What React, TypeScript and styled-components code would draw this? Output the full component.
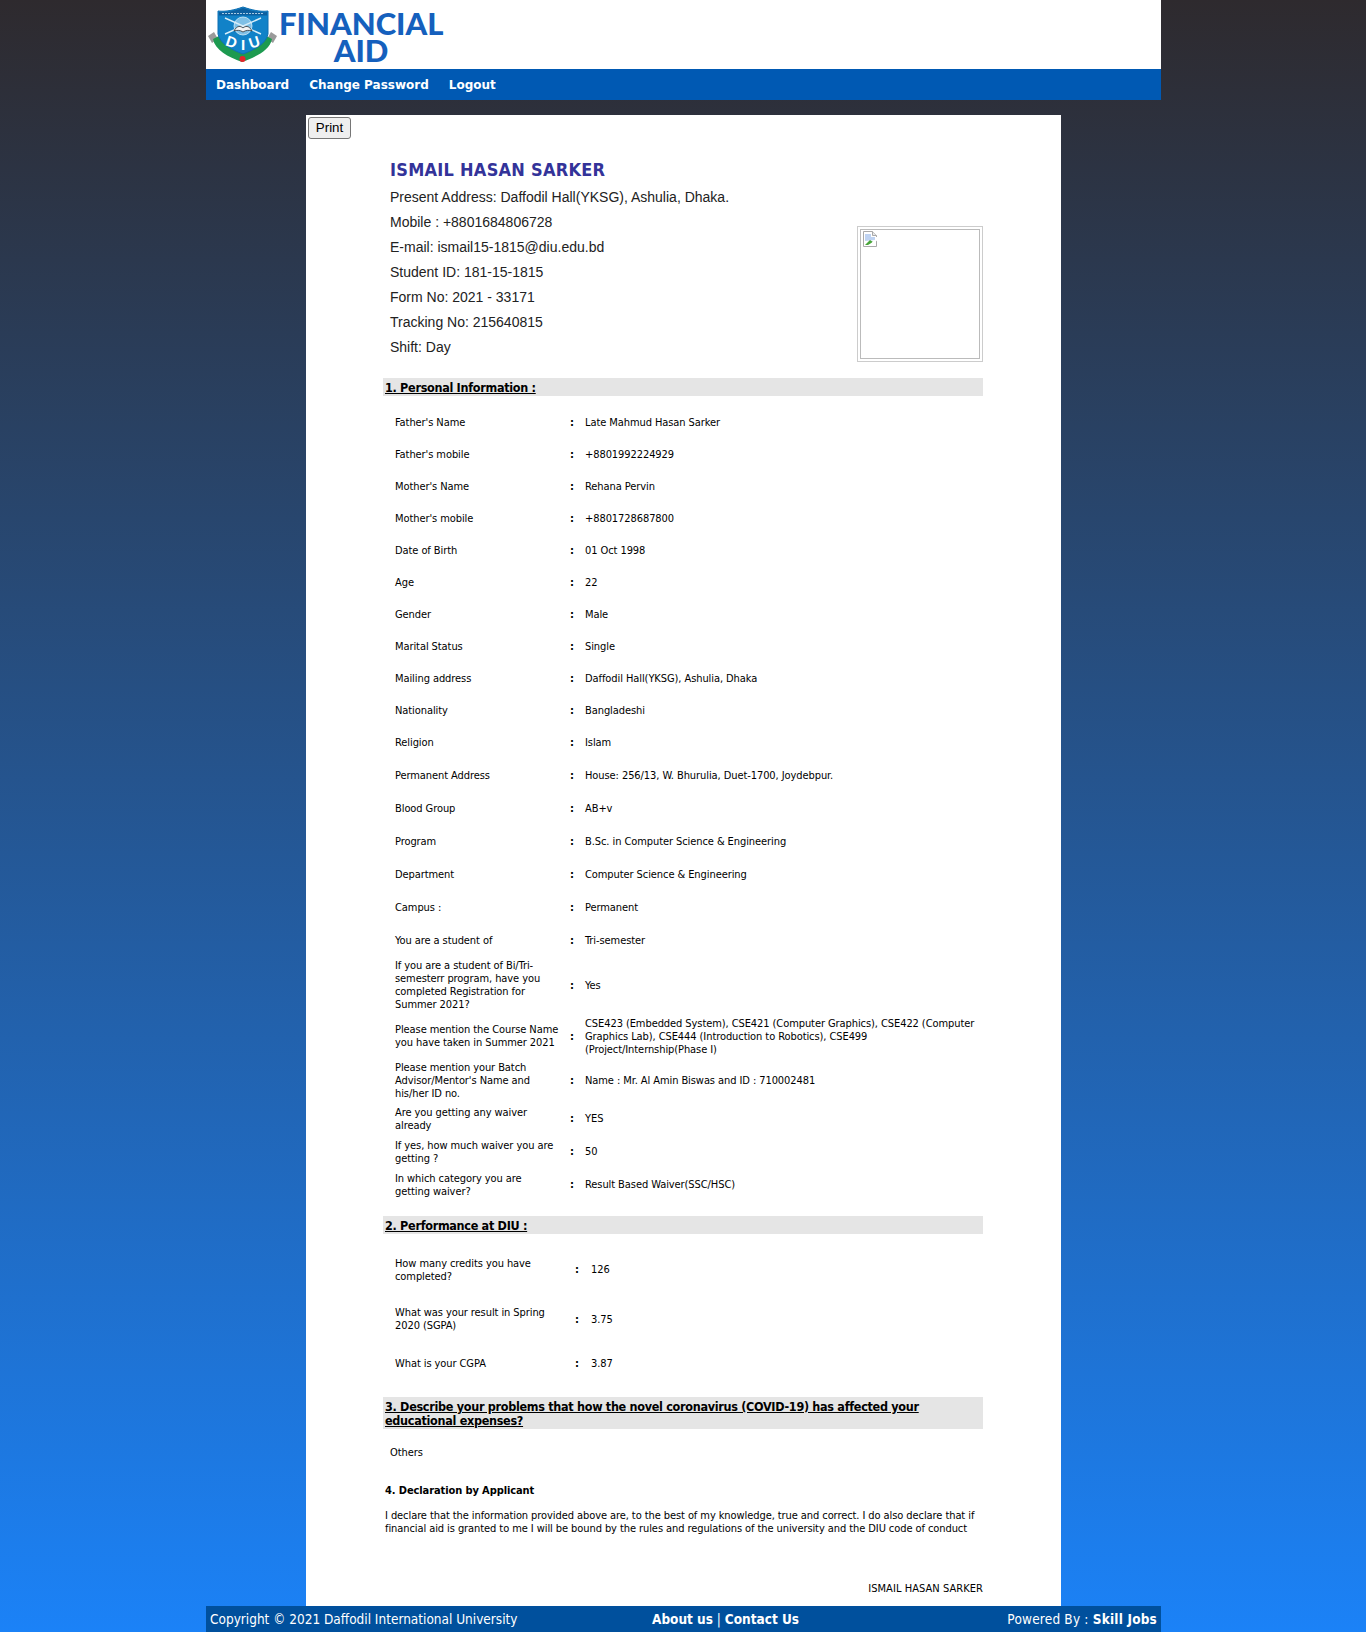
import React from "react";
import styled, { createGlobalStyle } from "styled-components";

const tahoma = `"DejaVu Sans Condensed", "DejaVu Sans", sans-serif`;

const GlobalStyle = createGlobalStyle`
  html, body {
    margin: 0;
    padding: 0;
  }
  body {
    background: linear-gradient(to bottom, #2e2a2e 0%, #1b82f7 100%);
    min-height: 1632px;
    font-family: ${tahoma};
    color: #000;
  }
`;

const Wrapper = styled.div`
  width: 955px;
  margin-left: 206px;
`;

const Header = styled.div`
  height: 69px;
  background: #fff;
  display: flex;
`;

const LogoTitle = styled.div`
  margin: 10px 0 0 0;
  width: 164px;
  text-align: center;
  font-family: "Lato", sans-serif;
  font-weight: 900;
  font-size: 31px;
  line-height: 27px;
  color: #1560bd;
`;

const Nav = styled.div`
  height: 31px;
  background: #0059b3;
  display: flex;
  align-items: center;
  padding-left: 10px;
  gap: 20px;
`;

const NavLink = styled.a`
  font-family: "DejaVu Sans", sans-serif;
  font-size: 12px;
  font-weight: 700;
  color: #fff;
`;

const Sheet = styled.div`
  width: 755px;
  height: 1491px;
  box-sizing: border-box;
  margin: 15px auto 0;
  padding: 2px 78px 0 77px;
  background: #fff;
  position: relative;
`;

const PrintButton = styled.button`
  position: absolute;
  left: 2px;
  top: 2px;
  width: 43px;
  height: 22px;
  padding: 0 0 1px;
  font-family: "Liberation Sans", sans-serif;
  font-size: 13.33px;
  color: #000;
  background: #efefef;
  border: 1px solid #767676;
  border-radius: 3px;
`;

const Head = styled.div`
  display: flex;
  justify-content: space-between;
  padding-top: 41px;
  height: 261px;
  box-sizing: border-box;
`;

const Info = styled.div`
  padding-left: 7px;
`;

const Name = styled.div`
  font-family: ${tahoma};
  font-size: 18px;
  font-weight: 700;
  letter-spacing: 0.25px;
  line-height: 24px;
  color: #333399;
  margin-bottom: 3px;
`;

const InfoLine = styled.div`
  font-family: "Liberation Sans", sans-serif;
  font-size: 14px;
  line-height: 25px;
  color: #222;
`;

const Photo = styled.div`
  align-self: flex-end;
  width: 126px;
  height: 136px;
  box-sizing: border-box;
  margin-bottom: 16px;
  padding: 2px;
  border: 1px solid #ccc;
`;

const PhotoInner = styled.div`
  height: 100%;
  box-sizing: border-box;
  border: 1px solid #bbb;
  padding: 1px;
  svg {
    display: block;
  }
`;

const SectionBar = styled.div<{ $top?: number }>`
  margin-top: ${(p) => p.$top ?? 0}px;
  margin-bottom: 10px;
  padding: 3px 2px 1px;
  background: #e5e5e5;
  font-size: 12.5px;
  font-weight: 700;
  letter-spacing: -0.3px;
  line-height: 14px;
  text-decoration: underline;
`;

const Row = styled.div<{ $h: number; $wide?: boolean }>`
  display: grid;
  grid-template-columns: ${(p) => (p.$wide ? "180px 16px 1fr" : "175px 15px 1fr")};
  align-items: center;
  height: ${(p) => p.$h}px;
  padding-left: 12px;
  font-size: 11px;
  letter-spacing: -0.08px;
  line-height: 13px;
`;

const Label = styled.div<{ $wide?: boolean }>`
  padding-right: ${(p) => (p.$wide ? 15 : 10)}px;
`;

const Colon = styled.div`
  font-weight: 700;
`;

const Others = styled.div`
  margin: 15px 0 0 7px;
  font-size: 11px;
  letter-spacing: -0.08px;
  line-height: 18px;
`;

const DeclTitle = styled.div`
  margin: 20px 0 0 2px;
  font-size: 11px;
  font-weight: 700;
  letter-spacing: -0.1px;
  line-height: 18px;
`;

const DeclText = styled.p`
  margin: 9px 0 0 2px;
  font-size: 11px;
  letter-spacing: -0.08px;
  line-height: 13px;
`;

const Signature = styled.div`
  margin-top: 47px;
  text-align: right;
  font-size: 11px;
  letter-spacing: 0.05px;
  line-height: 13px;
`;

const Footer = styled.div`
  height: 26px;
  background: #00509d;
  color: #fff;
  display: flex;
  align-items: center;
  justify-content: space-between;
  padding: 0 4px;
  font-size: 13.5px;
`;

const FooterLeft = styled.div`
  width: 442px;
`;

const FooterCenter = styled.div`
  flex: 1;
`;

const FooterRight = styled.div`
  letter-spacing: 0.2px;
`;

const Strong = styled.b`
  font-weight: 700;
`;

const ShieldLogo = () => (
  <svg width="73" height="66" viewBox="0 0 73 66" style={{ flex: "none" }}>
    <path d="M2 36 L8 32 L12 39 L6 43 Z" fill="#9a9a9a" />
    <path d="M71 36 L65 32 L61 39 L67 43 Z" fill="#9a9a9a" />
    <path d="M7 39 C9 50 22 57 36 62 C50 57 64 50 66 39 L58 35 L37 50 L15 35 Z" fill="#1d9a50" />
    <circle cx="36.5" cy="59" r="3" fill="#e3242b" />
    <path d="M12 11 C20 12 28 10 37 7 C46 10 54 12 62 11 L62 34 C60 44 48 50 37 54 C26 50 14 44 12 34 Z" fill="#1182c8" stroke="#0f6fb2" />
    <path d="M13 12 C20 13 28 11 37 8 C46 11 54 13 61 12 L61 15.5 L13 15.5 Z" fill="#0d5f9f" />
    <path d="M16 13.5 H58" stroke="#cfe6f5" strokeWidth="0.8" strokeDasharray="2 1" />
    <circle cx="37" cy="26" r="9" fill="#7fc0e6" stroke="#d8eef9" strokeWidth="0.8" />
    <path d="M19 18 L55 34 M55 18 L19 34" stroke="#d8eef9" strokeWidth="1.4" />
    <path d="M28 31 C31 25 35 26 37 28 C39 26 43 25 46 31 C43 30 40 30 37 32 C34 30 31 30 28 31 Z" fill="#f4f4f4" stroke="#333" strokeWidth="0.8" />
    <g fill="#fff" fontFamily="'Liberation Sans', sans-serif" fontWeight="700" fontSize="15" textAnchor="middle">
      <text x="24" y="47" transform="rotate(18 24 47)">D</text>
      <text x="37" y="50">I</text>
      <text x="50" y="47" transform="rotate(-18 50 47)">U</text>
    </g>
  </svg>
);

const BrokenImage = () => (
  <svg width="16" height="16" viewBox="0 0 16 16">
    <path d="M1.5 .5 H10.5 L14.5 4.5 V15.5 H1.5 Z" fill="#fff" stroke="#a9a9a9" />
    <path d="M10.5 .5 V4.5 H14.5" fill="#e8e8e8" stroke="#a9a9a9" />
    <path d="M3 3 H9 V6 H13 V9 L3 10 Z" fill="#bfd3f2" />
    <path d="M3 14 L8 9 L11 11 L6 14 Z" fill="#4aa53b" />
    <path d="M9 14 L14 9 V6" fill="none" stroke="#fff" strokeWidth="2" />
  </svg>
);

const personal: [string, string, number][] = [
  ["Father's Name", "Late Mahmud Hasan Sarker", 32],
  ["Father's mobile", "+8801992224929", 32],
  ["Mother's Name", "Rehana Pervin", 32],
  ["Mother's mobile", "+8801728687800", 32],
  ["Date of Birth", "01 Oct 1998", 32],
  ["Age", "22", 32],
  ["Gender", "Male", 32],
  ["Marital Status", "Single", 32],
  ["Mailing address", "Daffodil Hall(YKSG), Ashulia, Dhaka", 32],
  ["Nationality", "Bangladeshi", 32],
  ["Religion", "Islam", 33],
  ["Permanent Address", "House: 256/13, W. Bhurulia, Duet-1700, Joydebpur.", 33],
  ["Blood Group", "AB+v", 33],
  ["Program", "B.Sc. in Computer Science & Engineering", 33],
  ["Department", "Computer Science & Engineering", 33],
  ["Campus :", "Permanent", 33],
  ["You are a student of", "Tri-semester", 33],
  ["If you are a student of Bi/Tri-semesterr program, have you completed Registration for Summer 2021?", "Yes", 56],
  ["Please mention the Course Name you have taken in Summer 2021", "CSE423 (Embedded System), CSE421 (Computer Graphics), CSE422 (Computer Graphics Lab), CSE444 (Introduction to Robotics), CSE499 (Project/Internship(Phase I)", 46],
  ["Please mention your Batch Advisor/Mentor's Name and his/her ID no.", "Name : Mr. Al Amin Biswas and ID : 710002481", 43],
  ["Are you getting any waiver already", "YES", 33],
  ["If yes, how much waiver you are getting ?", "50", 33],
  ["In which category you are getting\u00a0waiver?", "Result Based Waiver(SSC/HSC)", 33],
];

const performance: [string, string, number][] = [
  ["How many credits you have completed?", "126", 51],
  ["What was your result in Spring 2020 (SGPA)", "3.75", 48],
  ["What is your CGPA", "3.87", 40],
];

const App = (): React.ReactElement => {
  return (
    <Wrapper>
      <GlobalStyle />
      <Header>
        <ShieldLogo />
        <LogoTitle>
          FINANCIAL
          <br />
          AID
        </LogoTitle>
      </Header>
      <Nav>
        <NavLink>Dashboard</NavLink>
        <NavLink>Change Password</NavLink>
        <NavLink>Logout</NavLink>
      </Nav>
      <Sheet>
        <PrintButton>Print</PrintButton>
        <Head>
          <Info>
            <Name>ISMAIL HASAN SARKER</Name>
            <InfoLine>Present Address: Daffodil Hall(YKSG), Ashulia, Dhaka.</InfoLine>
            <InfoLine>Mobile : +8801684806728</InfoLine>
            <InfoLine>E-mail: ismail15-1815@diu.edu.bd</InfoLine>
            <InfoLine>Student ID: 181-15-1815</InfoLine>
            <InfoLine>Form No: 2021 - 33171</InfoLine>
            <InfoLine>Tracking No: 215640815</InfoLine>
            <InfoLine>Shift: Day</InfoLine>
          </Info>
          <Photo>
            <PhotoInner>
              <BrokenImage />
            </PhotoInner>
          </Photo>
        </Head>
        <SectionBar>1. Personal Information :</SectionBar>
        {personal.map(([label, value, h]) => (
          <Row key={label} $h={h}>
            <Label>{label}</Label>
            <Colon>:</Colon>
            <div>{value}</div>
          </Row>
        ))}
        <SectionBar $top={15}>2. Performance at DIU :</SectionBar>
        {performance.map(([label, value, h]) => (
          <Row key={label} $h={h} $wide>
            <Label $wide>{label}</Label>
            <Colon>:</Colon>
            <div>{value}</div>
          </Row>
        ))}
        <SectionBar $top={14}>
          3. Describe your problems that how the novel coronavirus (COVID-19) has affected your educational expenses?
        </SectionBar>
        <Others>Others</Others>
        <DeclTitle>4. Declaration by Applicant</DeclTitle>
        <DeclText>
          I declare that the information provided above are, to the best of my knowledge, true and correct. I do also
          declare that if financial aid is granted to me I will be bound by the rules and regulations of the university
          and the DIU code of conduct
        </DeclText>
        <Signature>ISMAIL HASAN SARKER</Signature>
      </Sheet>
      <Footer>
        <FooterLeft>Copyright © 2021 Daffodil International University</FooterLeft>
        <FooterCenter>
          <Strong>About us</Strong> | <Strong>Contact Us</Strong>
        </FooterCenter>
        <FooterRight>
          Powered By : <Strong>Skill Jobs</Strong>
        </FooterRight>
      </Footer>
    </Wrapper>
  );
};

export default App;
